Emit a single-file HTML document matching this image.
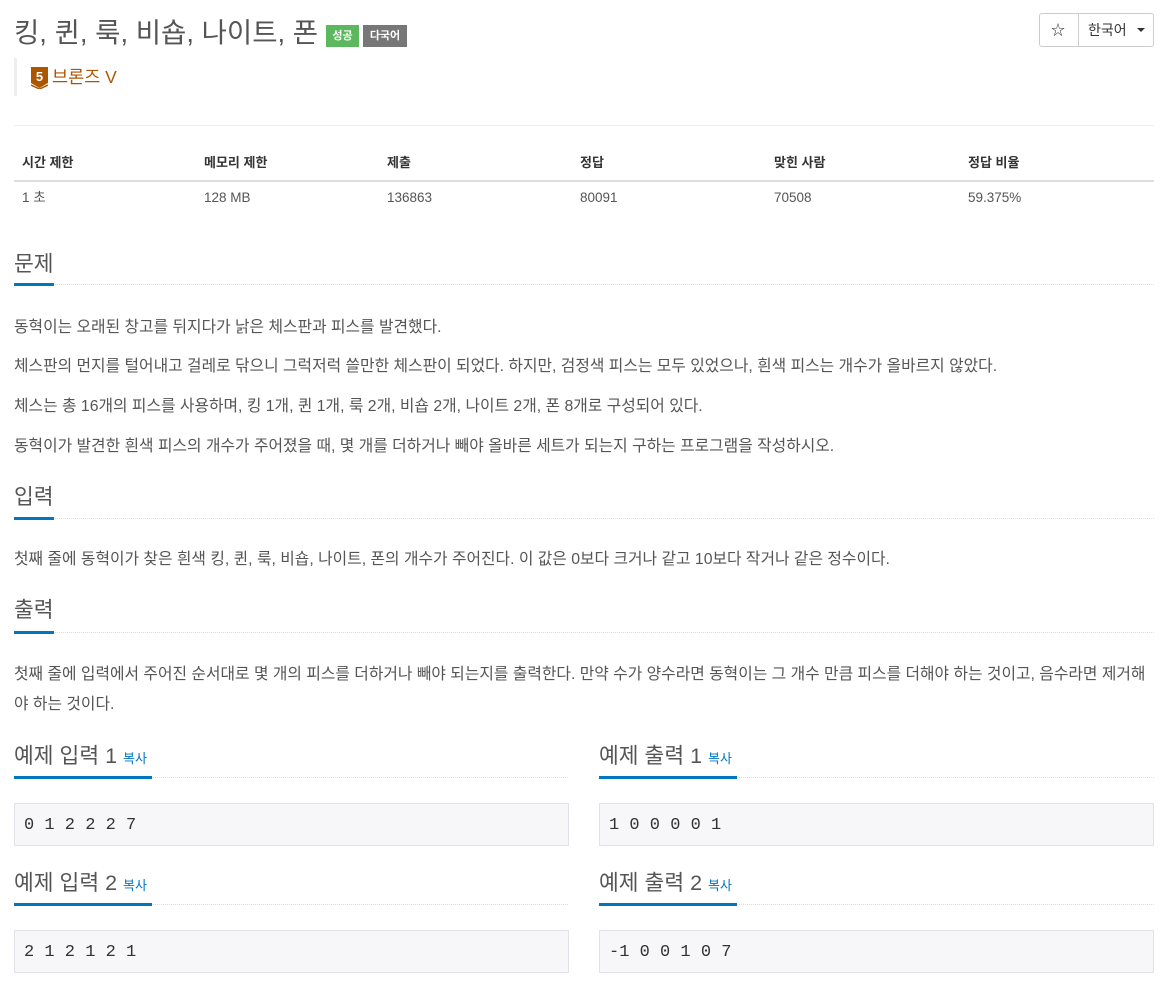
<!DOCTYPE html>
<html><head><meta charset="utf-8"><style>
*{margin:0;padding:0;box-sizing:border-box}
body{width:1173px;height:991px;background:#fff;font-family:"Liberation Sans","Noto Sans CJK KR",sans-serif;color:#555;position:relative;overflow:hidden}
.a{position:absolute;white-space:nowrap}
.h{font-size:21.5px;color:#555;line-height:30px}
.ul{position:absolute;height:3px;background:#0076c0}
.dl{position:absolute;height:0;border-top:1px dotted #ddd}
.p{font-size:15.8px;line-height:20px;color:#555}
.th{font-size:13px;font-weight:bold;color:#333;line-height:18px}
.td{font-size:13.5px;color:#555;line-height:18px;height:18px;overflow:visible}
.pre{position:absolute;background:#f7f7f9;border:1px solid #e1e1e8;height:43px;font-family:"Liberation Mono",monospace;font-size:17px;color:#333;padding:12px 9px 0;line-height:20px}
.copy{font-size:13px;color:#0076c0}
</style></head><body>
<div class="a" style="left:14px;top:15px;font-size:27.5px;color:#555;line-height:36px">킹, 퀸, 룩, 비숍, 나이트, 폰</div>
<div class="a" style="left:326px;top:25px;width:33px;height:22px;background:#5cb85c;color:#fff;font-size:11px;font-weight:bold;text-align:center;line-height:22px">성공</div>
<div class="a" style="left:363px;top:25px;width:44px;height:22px;background:#777;color:#fff;font-size:11px;font-weight:bold;text-align:center;line-height:22px">다국어</div>
<div class="a" style="left:1039px;top:13px;width:115px;height:34px;border:1px solid #ccc;border-radius:3px"></div>
<div class="a" style="left:1078px;top:13px;width:1px;height:34px;background:#ccc"></div>
<div class="a" style="left:1051px;top:19px;font-size:14px;color:#333;line-height:22px">☆</div>
<div class="a" style="left:1088px;top:19px;font-size:14px;color:#333;line-height:22px">한국어</div>
<div class="a" style="left:1137px;top:28px;width:0;height:0;border-left:4px solid transparent;border-right:4px solid transparent;border-top:4px solid #333"></div>
<div class="a" style="left:14px;top:58px;width:3px;height:38px;background:#eee"></div>
<svg class="a" style="left:31px;top:67px" width="17" height="22" viewBox="0 0 17 22"><path d="M0 0H17V16L8.5 21L0 16Z" fill="#ad5600"/><path d="M0 18L8.5 22L17 18" stroke="#ad5600" fill="none" stroke-width="1.5"/><text x="8.5" y="14" font-size="13" font-weight="bold" fill="#fff" text-anchor="middle" font-family="Liberation Sans">5</text></svg>
<div class="a" style="left:52px;top:66px;font-size:17.5px;color:#ad5600;line-height:22px">브론즈 V</div>
<div class="a" style="left:14px;top:125px;width:1140px;height:1px;background:#eee"></div>
<div class="a th" style="left:22px;top:154px">시간 제한</div>
<div class="a th" style="left:204px;top:154px">메모리 제한</div>
<div class="a th" style="left:387px;top:154px">제출</div>
<div class="a th" style="left:580px;top:154px">정답</div>
<div class="a th" style="left:774px;top:154px">맞힌 사람</div>
<div class="a th" style="left:968px;top:154px">정답 비율</div>
<div class="a" style="left:14px;top:180px;width:1140px;height:2px;background:#ddd"></div>
<div class="a td" style="left:22px;top:189px">1 초</div>
<div class="a td" style="left:204px;top:189px">128 MB</div>
<div class="a td" style="left:387px;top:189px">136863</div>
<div class="a td" style="left:580px;top:189px">80091</div>
<div class="a td" style="left:774px;top:189px">70508</div>
<div class="a td" style="left:968px;top:189px">59.375%</div>

<div class="a h" style="left:14px;top:249px">문제</div>
<div class="dl" style="left:14px;top:284px;width:1140px"></div><div class="ul" style="left:14px;top:283px;width:40px"></div>
<div class="a p" style="left:14px;top:318px">동혁이는 오래된 창고를 뒤지다가 낡은 체스판과 피스를 발견했다.</div>
<div class="a p" style="left:14px;top:357px">체스판의 먼지를 털어내고 걸레로 닦으니 그럭저럭 쓸만한 체스판이 되었다. 하지만, 검정색 피스는 모두 있었으나, 흰색 피스는 개수가 올바르지 않았다.</div>
<div class="a p" style="left:14px;top:397px">체스는 총 16개의 피스를 사용하며, 킹 1개, 퀸 1개, 룩 2개, 비숍 2개, 나이트 2개, 폰 8개로 구성되어 있다.</div>
<div class="a p" style="left:14px;top:437px">동혁이가 발견한 흰색 피스의 개수가 주어졌을 때, 몇 개를 더하거나 빼야 올바른 세트가 되는지 구하는 프로그램을 작성하시오.</div>

<div class="a h" style="left:14px;top:482px">입력</div>
<div class="dl" style="left:14px;top:518px;width:1140px"></div><div class="ul" style="left:14px;top:517px;width:40px"></div>
<div class="a p" style="left:14px;top:550px">첫째 줄에 동혁이가 찾은 흰색 킹, 퀸, 룩, 비숍, 나이트, 폰의 개수가 주어진다. 이 값은 0보다 크거나 같고 10보다 작거나 같은 정수이다.</div>

<div class="a h" style="left:14px;top:595px">출력</div>
<div class="dl" style="left:14px;top:632px;width:1140px"></div><div class="ul" style="left:14px;top:631px;width:40px"></div>
<div class="a p" style="left:14px;top:665px">첫째 줄에 입력에서 주어진 순서대로 몇 개의 피스를 더하거나 빼야 되는지를 출력한다. 만약 수가 양수라면 동혁이는 그 개수 만큼 피스를 더해야 하는 것이고, 음수라면 제거해</div>
<div class="a p" style="left:14px;top:695px">야 하는 것이다.</div>

<div class="a h" style="left:14px;top:741px">예제 입력 1 <span class="copy">복사</span></div>
<div class="dl" style="left:14px;top:777px;width:554px"></div><div class="ul" style="left:14px;top:776px;width:138px"></div>
<div class="pre" style="left:14px;top:803px;width:555px">0 1 2 2 2 7</div>
<div class="a h" style="left:599px;top:741px">예제 출력 1 <span class="copy">복사</span></div>
<div class="dl" style="left:599px;top:777px;width:555px"></div><div class="ul" style="left:599px;top:776px;width:138px"></div>
<div class="pre" style="left:599px;top:803px;width:555px">1 0 0 0 0 1</div>

<div class="a h" style="left:14px;top:868px">예제 입력 2 <span class="copy">복사</span></div>
<div class="dl" style="left:14px;top:904px;width:554px"></div><div class="ul" style="left:14px;top:903px;width:138px"></div>
<div class="pre" style="left:14px;top:930px;width:555px">2 1 2 1 2 1</div>
<div class="a h" style="left:599px;top:868px">예제 출력 2 <span class="copy">복사</span></div>
<div class="dl" style="left:599px;top:904px;width:555px"></div><div class="ul" style="left:599px;top:903px;width:138px"></div>
<div class="pre" style="left:599px;top:930px;width:555px">-1 0 0 1 0 7</div>
</body></html>
